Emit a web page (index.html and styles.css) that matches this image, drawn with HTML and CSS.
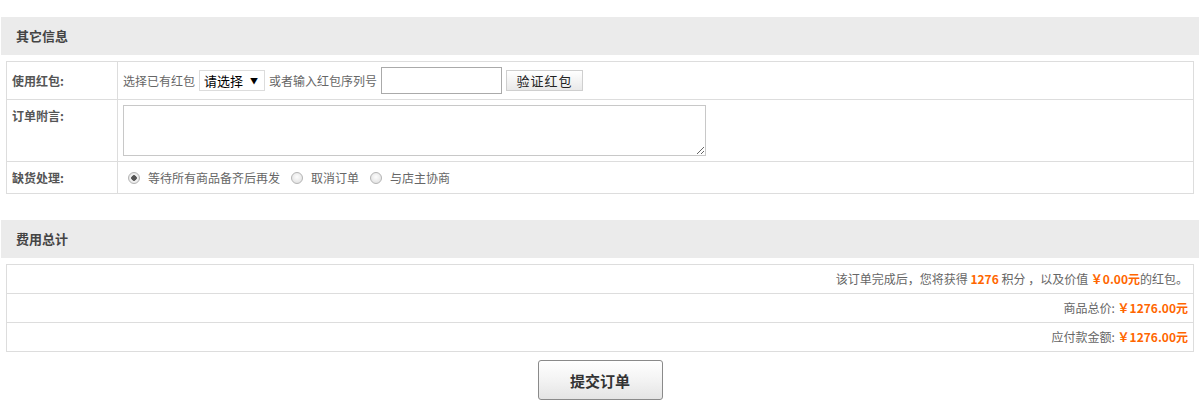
FILE: index.html
```html
<!DOCTYPE html>
<html lang="zh-CN">
<head>
  <meta charset="UTF-8">
  <meta name="viewport" content="width=device-width, initial-scale=1.0">
  <title>订单确认</title>
  <link rel="stylesheet" href="styles.css">
</head>
<body>
<div class="wrap">
  <div class="block-title">其它信息</div>
  <table class="info-table">
    <tr class="row-bonus">
      <th>使用红包:</th>
      <td>
        <div class="inline">
          <span>选择已有红包</span>
          <span class="select-box">
            <select name="bonus">
              <option>请选择</option>
            </select>
          </span>
          <span>或者输入红包序列号</span>
          <input type="text" class="bonus-sn" name="bonus_sn">
          <input type="button" class="btn-check" value="验证红包">
        </div>
      </td>
    </tr>
    <tr class="row-note">
      <th>订单附言:</th>
      <td><textarea name="postscript" class="note"></textarea></td>
    </tr>
    <tr class="row-oos">
      <th>缺货处理:</th>
      <td>
        <div class="inline">
          <label class="radio"><input type="radio" name="how_oos" checked> 等待所有商品备齐后再发</label>
          <label class="radio"><input type="radio" name="how_oos"> 取消订单</label>
          <label class="radio"><input type="radio" name="how_oos"> 与店主协商</label>
        </div>
      </td>
    </tr>
  </table>

  <div class="block-title second">费用总计</div>
  <table class="total-table">
    <tr>
      <td>该订单完成后，您将获得 <b class="price">1276</b> 积分 ，以及价值 <b class="price">￥0.00元</b>的红包。</td>
    </tr>
    <tr>
      <td>商品总价: <b class="price">￥1276.00元</b></td>
    </tr>
    <tr>
      <td>应付款金额: <b class="price">￥1276.00元</b></td>
    </tr>
  </table>

  <div class="submit-row">
    <button type="submit" class="btn-submit">提交订单</button>
  </div>
</div>
</body>
</html>
```

FILE: styles.css
```css
body {
  margin: 0;
  font-family: "Microsoft YaHei", "Noto Sans CJK SC", "Noto Sans", sans-serif;
  font-size: 12px;
  color: #666;
  background-color: #ffffff;
}
.wrap {
  width: 1198px;
  margin-left: 1px;
  padding-top: 17px;
}
.block-title {
  height: 38px;
  line-height: 38px;
  padding-left: 15px;
  background-color: #ebebeb;
  font-size: 13px;
  font-weight: bold;
  color: #444;
}
.block-title.second {
  margin-top: 26px;
}
table {
  border-collapse: collapse;
  width: 1188px;
  margin: 6px 0 0 5px;
}
th,
td {
  border: 1px solid #dddddd;
  padding: 5px;
}
th {
  width: 100px;
  text-align: left;
  font-weight: bold;
  color: #555;
  vertical-align: middle;
}
.row-note th {
  vertical-align: top;
  padding-top: 7px;
}
.row-oos th,
.row-oos td {
  height: 21px;
}
.inline {
  display: flex;
  align-items: center;
  gap: 4px;
}
.select-box {
  position: relative;
  display: inline-block;
}
.select-box select {
  appearance: none;
  -webkit-appearance: none;
  width: 66px;
  height: 21px;
  padding: 0 0 0 4px;
  border: 1px solid #dcdcdc;
  background: #fff;
  font-family: inherit;
  font-size: 13px;
  color: #000;
}
.select-box::after {
  content: "\25BC";
  position: absolute;
  right: 7px;
  top: 5px;
  font-size: 8px;
  color: #000;
  pointer-events: none;
}
.bonus-sn {
  width: 121px;
  height: 27px;
  box-sizing: border-box;
  border: 1px solid #aaa;
  margin: 0;
}
.btn-check {
  width: 77px;
  height: 21px;
  margin: 0;
  padding: 0;
  border: 1px solid #cfcfcf;
  background: linear-gradient(#ffffff, #e9e9e9);
  font-family: inherit;
  font-size: 13px;
  letter-spacing: 1px;
  color: #222;
}
.note {
  display: block;
  width: 583px;
  height: 51px;
  box-sizing: border-box;
  margin: 0;
  border: 1px solid #c8c8c8;
}
.radio {
  display: inline-flex;
  align-items: center;
  margin-right: 2px;
}
.radio input {
  appearance: none;
  -webkit-appearance: none;
  width: 12px;
  height: 12px;
  margin: 0 8px 0 5px;
  border: 1px solid #b5b5b5;
  border-radius: 50%;
  background: radial-gradient(circle at 50% 40%, #fdfdfd, #dcdcdc);
}
.radio input:checked {
  background: radial-gradient(circle, #555 0 2.5px, #f4f4f4 3px, #dadada);
}
.total-table td {
  text-align: right;
  height: 18px;
  padding: 5px;
  line-height: 18px;
  color: #666;
}
.price {
  color: #ff6600;
  font-weight: bold;
}
.submit-row {
  display: flex;
  justify-content: center;
  padding-top: 8px;
}
.btn-submit {
  width: 125px;
  height: 40px;
  border: 1px solid #8a8a8a;
  border-radius: 3px;
  background: linear-gradient(#ffffff, #f3f3f3 50%, #e4e4e4);
  font-family: inherit;
  font-size: 15px;
  font-weight: bold;
  color: #333;
}
```
